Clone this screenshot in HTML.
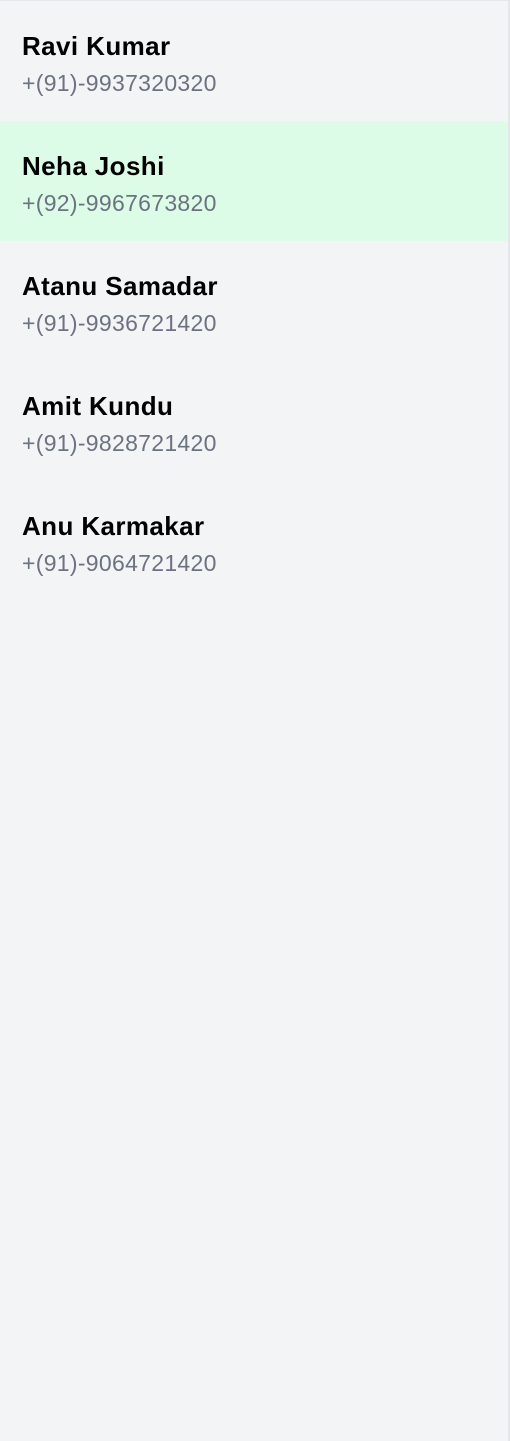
<!DOCTYPE html>
<html><head><style>
html,body{margin:0;padding:0;}
body{width:510px;height:1441px;background:#f3f4f6;font-family:"Liberation Sans",sans-serif;position:relative;overflow:hidden;}
.wrap{position:absolute;left:0;top:0;width:510px;height:1441px;border-top:1px solid #e5e7eb;border-right:2px solid #e5e7eb;box-sizing:border-box;}
.row{height:120px;box-sizing:border-box;padding:29px 0 0 22px;}
.row.sel{background:#dcfce7;}
.n{font-size:26px;font-weight:bold;line-height:32px;color:#000;letter-spacing:0.4px;}
.p{font-size:23px;line-height:34px;color:#6b7280;margin-top:4px;letter-spacing:0.3px;}
</style></head><body><div class="wrap">
<div class="row"><div class="n">Ravi Kumar</div><div class="p">+(91)-9937320320</div></div>
<div class="row sel"><div class="n">Neha Joshi</div><div class="p">+(92)-9967673820</div></div>
<div class="row"><div class="n">Atanu Samadar</div><div class="p">+(91)-9936721420</div></div>
<div class="row"><div class="n">Amit Kundu</div><div class="p">+(91)-9828721420</div></div>
<div class="row"><div class="n">Anu Karmakar</div><div class="p">+(91)-9064721420</div></div>
</div></body></html>
